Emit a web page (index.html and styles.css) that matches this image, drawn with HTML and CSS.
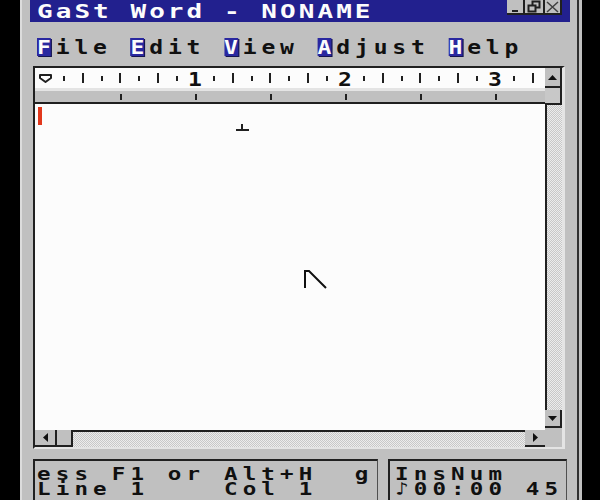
FILE: index.html
```html
<!DOCTYPE html>
<html>
<head>
<meta charset="utf-8">
<link rel="stylesheet" href="styles.css">
</head>
<body>
<div class="window">
  <div class="titlebar">
    <span class="title">GaSt Word - NONAME</span>
    <div class="winbtns">
      <span class="wbtn wmin"><svg width="16" height="13"><rect x="5" y="10" width="6" height="2" fill="#202020"/></svg></span>
      <span class="wbtn wres"><svg width="18" height="13"><rect x="7.5" y="1.5" width="7" height="6" fill="none" stroke="#202020" stroke-width="2"/><rect x="3.5" y="5.5" width="7" height="6" fill="#c0c0c0" stroke="#202020" stroke-width="2"/></svg></span>
      <span class="wbtn wcls"><svg width="15" height="13"><path d="M2 2 L13 12 M13 2 L2 12" stroke="#404040" stroke-width="1.5"/></svg></span>
    </div>
  </div>
  <div class="menubar"><div class="menutext"><span class="hot">F</span>ile <span class="hot">E</span>dit <span class="hot">V</span>iew <span class="hot">A</span>djust <span class="hot">H</span>elp</div></div>
  <div class="frame">
    <div class="main">
      <div class="ruler">
        <div class="scale">
          <span class="c"><svg width="13" height="9"><path d="M1 1 H12 V4 L6.5 8 L1 4 Z" fill="#fff" stroke="#202020" stroke-width="2" stroke-linejoin="round"/></svg></span>
          <span class="c"><i class="t"></i></span>
          <span class="c"><i class="t l"></i></span>
          <span class="c"><i class="t"></i></span>
          <span class="c"><i class="t l"></i></span>
          <span class="c"><i class="t"></i></span>
          <span class="c"><i class="t l"></i></span>
          <span class="c"><i class="t"></i></span>
          <span class="c num"><b class="n">1</b></span>
          <span class="c"><i class="t"></i></span>
          <span class="c"><i class="t l"></i></span>
          <span class="c"><i class="t"></i></span>
          <span class="c"><i class="t l"></i></span>
          <span class="c"><i class="t"></i></span>
          <span class="c"><i class="t l"></i></span>
          <span class="c"><i class="t"></i></span>
          <span class="c num"><b class="n">2</b></span>
          <span class="c"><i class="t"></i></span>
          <span class="c"><i class="t l"></i></span>
          <span class="c"><i class="t"></i></span>
          <span class="c"><i class="t l"></i></span>
          <span class="c"><i class="t"></i></span>
          <span class="c"><i class="t l"></i></span>
          <span class="c"><i class="t"></i></span>
          <span class="c num"><b class="n">3</b></span>
          <span class="c"><i class="t"></i></span>
          <span class="c"><i class="t l"></i></span>
        </div>
        <div class="strip"></div>
      </div>
      <div class="doc">
        <div class="caret"></div>
        <svg class="center-mark" width="13" height="8"><rect x="0" y="5" width="13" height="2" fill="#202020"/><rect x="5" y="0" width="2" height="5" fill="#202020"/></svg>
        <svg class="pointer" width="24" height="20"><polyline points="2,19 2,2 6,2 23,19" fill="none" stroke="#101010" stroke-width="2"/></svg>
      </div>
      <div class="hscroll">
        <div class="hbtn hleft"><svg width="5" height="9"><polygon points="5,0 5,9 0,4.5" fill="#101010"/></svg></div>
        <div class="hthumb"></div>
        <div class="htrack"></div>
        <div class="hbtn hright"><svg width="5" height="9"><polygon points="0,0 0,9 5,4.5" fill="#101010"/></svg></div>
      </div>
    </div>
    <div class="vscroll">
      <div class="vbtn vup"><svg width="9" height="5"><polygon points="0,5 4.5,0 9,5" fill="#101010"/></svg></div>
      <div class="vthumb"></div>
      <div class="vtrack"></div>
      <div class="vbtn vdown"><svg width="9" height="5"><polygon points="0,0 9,0 4.5,5" fill="#101010"/></svg></div>
      <div class="corner"></div>
    </div>
  </div>
  <div class="status">
    <div class="sbox sbox1"><div class="stext">ess F1 or Alt+H  g
Line 1    Col 1</div></div>
    <div class="sbox sbox2"><div class="stext">InsNum
♪00:00 45</div></div>
  </div>
</div>
</body>
</html>
```
FILE: styles.css
```css
* { box-sizing: border-box; }
html, body { margin: 0; padding: 0; }
body {
  background: #000;
  width: 600px;
  height: 500px;
  overflow: hidden;
  font-family: "DejaVu Sans Mono", monospace;
  font-weight: bold;
  color: #101010;
}
.window {
  margin-left: 20px;
  width: 562px;
  height: 500px;
  background: #c0c0c0;
  box-shadow: inset -3px 0 #c0c0c0, inset -5px 0 #303030, inset 2px 0 #dcdcdc;
  display: flex;
  flex-direction: column;
}
.titlebar {
  flex: none;
  margin-left: 10px;
  width: 540px;
  height: 22px;
  background: #22208e;
  display: flex;
  justify-content: space-between;
  align-items: flex-start;
  padding: 0 8px 0 7px;
}
.title {
  color: #fcfcfc;
  font-size: 20px;
  line-height: 22px;
  letter-spacing: 2.34px;
  white-space: pre;
  transform: scaleX(1.3);
  transform-origin: 0 50%;
}
.winbtns { display: flex; }
.wbtn {
  height: 15px;
  background: #c0c0c0;
  border-right: 2px solid #202020;
  border-bottom: 2px solid #202020;
  display: flex;
}
.wmin { width: 18px; }
.wres { width: 20px; }
.wcls { width: 17px; }
.menubar {
  flex: none;
  height: 44px;
  padding: 16px 0 0 17px;
}
.menutext {
  display: inline-block;
  vertical-align: top;
  font-size: 20px;
  line-height: 18px;
  letter-spacing: 4.22px;
  white-space: pre;
  transform: scaleX(1.15);
  transform-origin: 0 50%;
}
.hot {
  display: inline-block;
  height: 18px;
  background: #2a28a0;
  color: #fcfcfc;
  letter-spacing: 0;
  margin-right: 4.22px;
  box-shadow: 1px 1px 0 #141450;
}
.frame {
  flex: none;
  margin-left: 13px;
  width: 532px;
  height: 383px;
  border-top: 2px solid #202020;
  border-left: 2px solid #202020;
  border-right: 3px solid #e4e4e4;
  border-bottom: 2px solid #e4e4e4;
  display: flex;
}
.main {
  width: 510px;
  display: flex;
  flex-direction: column;
}
.ruler { flex: none; height: 36px; }
.scale {
  height: 20px;
  background: #fcfcfc;
  display: flex;
  padding-left: 1.1px;
}
.c {
  flex: none;
  width: 18.75px;
  display: flex;
  align-items: center;
  justify-content: center;
}
.c.num { align-items: flex-end; }
.t { display: block; width: 2px; height: 5px; background: #202020; }
.t.l { height: 10px; }
.n {
  font-size: 20px;
  line-height: 17px;
  transform: scaleX(1.15);
}
.strip {
  height: 16px;
  border-top: 3px solid #e4e4e4;
  border-bottom: 2px solid #202020;
  padding-left: 84.5px;
  background: linear-gradient(to right, #202020 0 2px, transparent 2px) 0 3px / 75px 6px repeat-x content-box, #c0c0c0 border-box;
}
.doc {
  flex: 1;
  background: #fcfcfc;
  position: relative;
  overflow: hidden;
}
.caret {
  width: 4px;
  height: 18px;
  background: #e2381c;
  margin: 3px 0 0 3px;
}
.center-mark { position: absolute; left: 201px; top: 20px; }
.pointer { position: absolute; left: 268px; top: 165px; }
.hscroll { flex: none; height: 17px; display: flex; }
.hbtn, .vbtn {
  background: #c0c0c0;
  display: flex;
  align-items: center;
  justify-content: center;
}
.hleft {
  width: 22px;
  border-right: 2px solid #202020;
  border-bottom: 2px solid #202020;
}
.hthumb {
  width: 16px;
  background: #c0c0c0;
  border-right: 2px solid #202020;
  border-bottom: 2px solid #202020;
}
.htrack, .vtrack {
  flex: 1;
  background: repeating-conic-gradient(#c8c8c8 0 25%, #ececec 0 50%) 0 0 / 2px 2px;
}
.htrack { border-top: 2px solid #202020; }
.hright {
  width: 20px;
  border-bottom: 2px solid #202020;
}
.vscroll {
  width: 17px;
  display: flex;
  flex-direction: column;
}
.vup {
  flex: none;
  height: 20px;
  border-right: 2px solid #202020;
  border-bottom: 2px solid #202020;
}
.vthumb {
  flex: none;
  height: 17px;
  background: #c8c8c8;
  border-right: 2px solid #202020;
  border-bottom: 2px solid #202020;
}
.vtrack { border-left: 2px solid #202020; }
.vdown {
  flex: none;
  height: 18px;
  border-right: 2px solid #202020;
  border-bottom: 2px solid #202020;
}
.corner { flex: none; height: 19px; background: #c0c0c0; }
.status {
  display: flex;
  gap: 10px;
  margin: 10px 0 0 13px;
}
.sbox {
  height: 50px;
  overflow: hidden;
  border-top: 2px solid #202020;
  border-left: 2px solid #202020;
  border-right: 1px solid #505050;
  padding: 5px 0 0 2px;
}
.stext {
  display: inline-block;
  vertical-align: top;
  font-size: 18px;
  line-height: 15px;
  letter-spacing: 4.12px;
  white-space: pre;
  transform: scaleX(1.25);
  transform-origin: 0 0;
}
.sbox1 { width: 345px; }
.sbox2 { width: 179px; padding-left: 5px; }
```
